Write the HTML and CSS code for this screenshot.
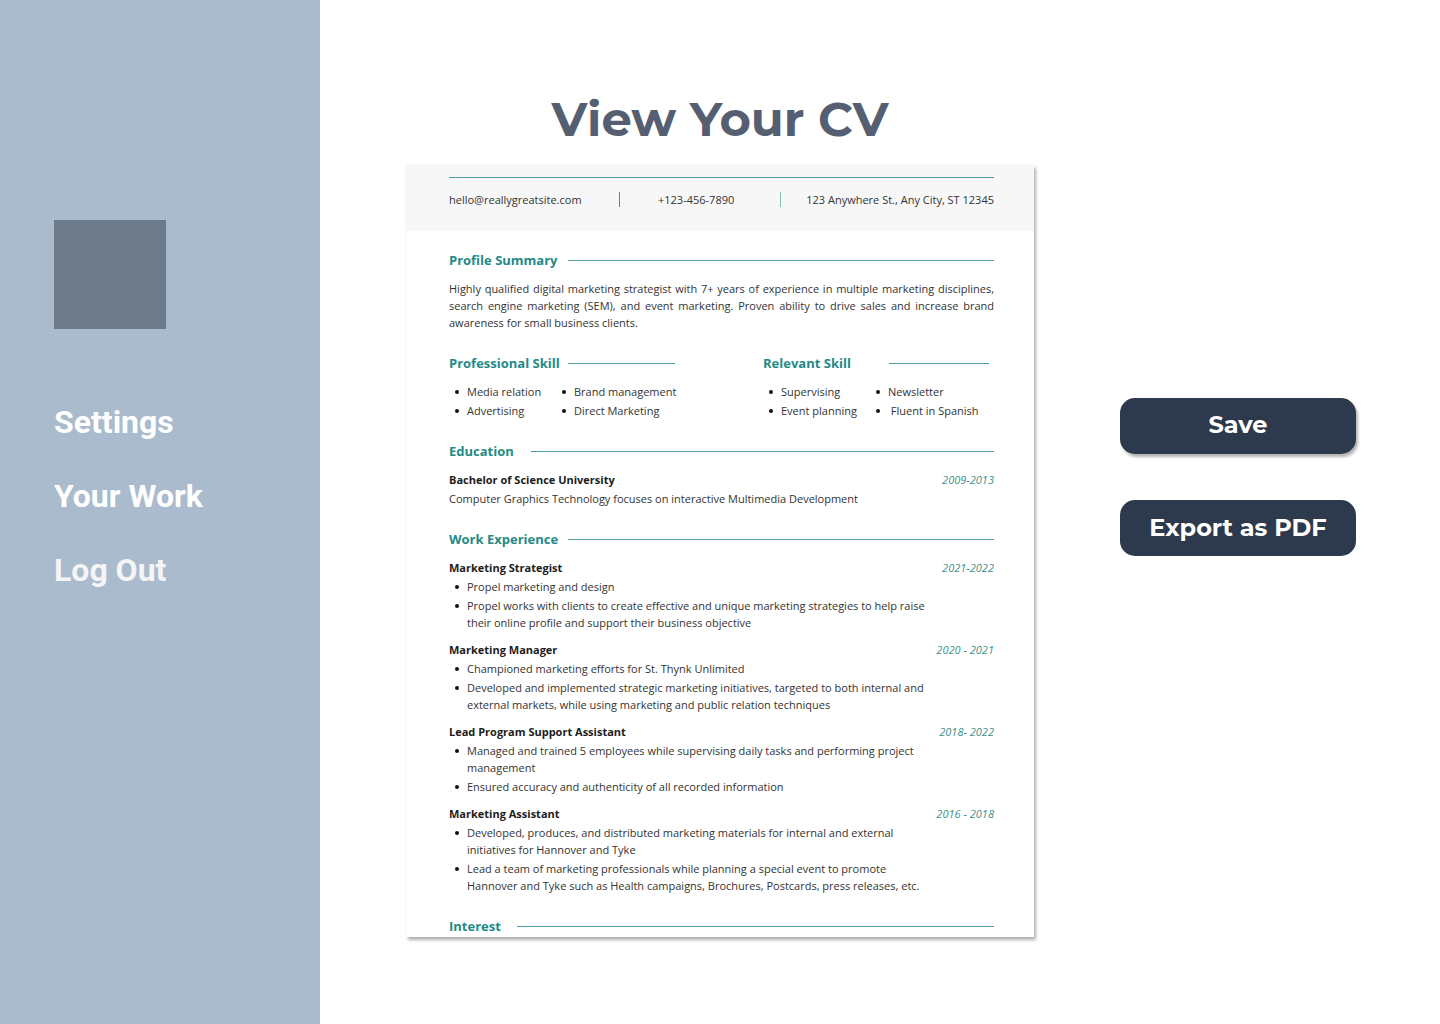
FILE: index.html
```html
<!DOCTYPE html>
<html lang="en">
<head>
<meta charset="utf-8">
<meta name="viewport" content="width=device-width, initial-scale=1">
<title>View Your CV</title>
<link rel="stylesheet" href="styles.css">
</head>
<body>
<div class="app">
  <aside class="sidebar">
    <div class="avatar"></div>
    <nav class="menu">
      <a href="#settings">Settings</a>
      <a href="#work">Your Work</a>
      <a href="#logout" class="muted">Log Out</a>
    </nav>
  </aside>
  <main class="main">
    <div class="preview">
      <h1 class="title">View Your CV</h1>
      <article class="cv">
        <header class="cv-header">
          <div class="contact">
            <span>hello@reallygreatsite.com</span>
            <i class="divider"></i>
            <span class="phone">+123-456-7890</span>
            <i class="divider light"></i>
            <span class="address">123 Anywhere St., Any City, ST 12345</span>
          </div>
        </header>
        <div class="cv-body">
          <section>
            <h2 class="heading"><span>Profile Summary</span></h2>
            <p class="summary">Highly qualified digital marketing strategist with 7+ years of experience in multiple marketing disciplines, search engine marketing (SEM), and event marketing. Proven ability to drive sales and increase brand awareness for small business clients.</p>
          </section>
          <div class="skills">
            <section>
              <h2 class="heading"><span>Professional Skill</span></h2>
              <ul class="list pairs">
                <li>Media relation</li>
                <li>Brand management</li>
                <li>Advertising</li>
                <li>Direct Marketing</li>
              </ul>
            </section>
            <section>
              <h2 class="heading wide"><span>Relevant Skill</span></h2>
              <ul class="list pairs">
                <li>Supervising</li>
                <li>Newsletter</li>
                <li>Event planning</li>
                <li>&nbsp;Fluent in Spanish</li>
              </ul>
            </section>
          </div>
          <section>
            <h2 class="heading medium"><span>Education</span></h2>
            <div class="entry">
              <h3 class="entry-head"><span>Bachelor of Science University</span><em>2009-2013</em></h3>
              <p>Computer Graphics Technology focuses on interactive Multimedia Development</p>
            </div>
          </section>
          <section>
            <h2 class="heading"><span>Work Experience</span></h2>
            <div class="jobs">
              <div class="entry">
                <h3 class="entry-head"><span>Marketing Strategist</span><em>2021-2022</em></h3>
                <ul class="list">
                  <li>Propel marketing and design</li>
                  <li>Propel works with clients to create effective and unique marketing strategies to help raise<br>their online profile and support their business objective</li>
                </ul>
              </div>
              <div class="entry">
                <h3 class="entry-head"><span>Marketing Manager</span><em>2020 - 2021</em></h3>
                <ul class="list">
                  <li>Championed marketing efforts for St. Thynk Unlimited</li>
                  <li>Developed and implemented strategic marketing initiatives, targeted to both internal and<br>external markets, while using marketing and public relation techniques</li>
                </ul>
              </div>
              <div class="entry">
                <h3 class="entry-head"><span>Lead Program Support Assistant</span><em>2018- 2022</em></h3>
                <ul class="list">
                  <li>Managed and trained 5 employees while supervising daily tasks and performing project<br>management</li>
                  <li>Ensured accuracy and authenticity of all recorded information</li>
                </ul>
              </div>
              <div class="entry">
                <h3 class="entry-head"><span>Marketing Assistant</span><em>2016 - 2018</em></h3>
                <ul class="list">
                  <li>Developed, produces, and distributed marketing materials for internal and external<br>initiatives for Hannover and Tyke</li>
                  <li>Lead a team of marketing professionals while planning a special event to promote<br>Hannover and Tyke such as Health campaigns, Brochures, Postcards, press releases, etc.</li>
                </ul>
              </div>
            </div>
          </section>
          <section>
            <h2 class="heading short"><span>Interest</span></h2>
          </section>
        </div>
      </article>
    </div>
    <div class="actions">
      <button type="button" class="button raised">Save</button>
      <button type="button" class="button">Export as PDF</button>
    </div>
  </main>
</div>
</body>
</html>
```
FILE: styles.css
```css
* {
  box-sizing: border-box;
}

body,
h1,
h2,
h3,
p,
ul {
  margin: 0;
  padding: 0;
}

body {
  background: #fff;
}

.app {
  display: flex;
  min-height: 100vh;
}

.sidebar {
  flex: 0 0 320px;
  padding: 220px 54px 0;
  background: #aabbcd;
}

.avatar {
  width: 112px;
  height: 109px;
  background: #6d7a8a;
}

.menu {
  display: flex;
  flex-direction: column;
  gap: 36px;
  margin-top: 74px;
  font: 700 32px/38px Roboto, sans-serif;
}

.menu a {
  color: #fff;
  text-decoration: none;
}

.menu .muted {
  color: #f5f5f5;
}

.main {
  flex: 1;
  display: grid;
  grid-template-columns: minmax(0, 1fr) 236px;
  align-items: start;
  gap: 86px;
  padding: 89px 84px 80px 86px;
}

.title {
  margin-bottom: 16px;
  color: #565f71;
  font: 700 48px/60px Montserrat, Inter, sans-serif;
  text-align: center;
}

.cv {
  background: #fff;
  box-shadow: 2px 3px 3px rgba(0, 0, 0, 0.3), 0 0 1px rgba(0, 0, 0, 0.1);
  color: #333;
  font: 400 11px/17px "Open Sans", sans-serif;
}

.cv-header {
  height: 66px;
  padding: 12px 40px 0 43px;
  background: #f7f7f7;
}

.contact {
  display: grid;
  grid-template-columns: 170fr 1px 160fr 1px 213fr;
  align-items: center;
  padding-top: 13px;
  border-top: 1px solid #4d9c99;
}

.divider {
  height: 15px;
  background: #3f9592;
}

.divider.light {
  background: #84c3b4;
}

.phone {
  padding-left: 38px;
}

.address {
  text-align: right;
}

.cv-body {
  display: flex;
  flex-direction: column;
  gap: 22px;
  padding: 19px 40px 1px 43px;
}

.heading {
  display: grid;
  grid-template-columns: 119px 1fr;
  align-items: center;
  color: #238a87;
  font-size: 13px;
  font-weight: 700;
  line-height: 20px;
}

.heading::after {
  content: "";
  height: 1px;
  background: #4d9c99;
}

.heading.wide {
  grid-template-columns: 126px 1fr;
}

.heading.medium {
  grid-template-columns: 82px 1fr;
}

.heading.short {
  grid-template-columns: 68px 1fr;
}

.heading + * {
  margin-top: 10px;
}

.summary {
  text-align: justify;
}

.skills {
  display: grid;
  grid-template-columns: 1fr 1fr;
  gap: 88px;
  padding-right: 5px;
}

.list {
  display: grid;
  row-gap: 2px;
  list-style: none;
}

.list.pairs {
  grid-template-columns: 107px minmax(0, 1fr);
  white-space: nowrap;
}

.list li {
  position: relative;
  padding-left: 18px;
}

.list li::before {
  content: "";
  position: absolute;
  top: 7px;
  left: 6px;
  width: 4px;
  height: 4px;
  border-radius: 50%;
  background: #111;
}

.jobs {
  display: grid;
  gap: 10px;
}

.entry {
  display: grid;
  gap: 2px;
}

.entry-head {
  display: flex;
  justify-content: space-between;
  color: #1c1c1c;
  font-size: 11px;
  font-weight: 700;
}

.entry-head em {
  color: #3d8f8c;
  font-weight: 400;
}

.actions {
  display: grid;
  gap: 46px;
  margin-top: 309px;
}

.button {
  height: 56px;
  padding: 0;
  border: 0;
  border-radius: 15px;
  background: #2d394c;
  color: #fff;
  font: 700 24px/30px Montserrat, Inter, sans-serif;
  cursor: pointer;
}

.button.raised {
  padding-bottom: 2px;
  box-shadow: 2px 3px 3px rgba(0, 0, 0, 0.3);
}
```
